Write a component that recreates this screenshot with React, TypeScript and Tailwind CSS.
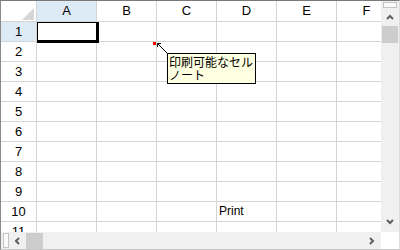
import React from "react";

const cols = ["A", "B", "C", "D", "E", "F"];
const rows = [1, 2, 3, 4, 5, 6, 7, 8, 9, 10, 11];

const Chevron = ({ dir }: { dir: "up" | "down" | "left" | "right" }) => {
  const d = {
    up: "M1 5 L4 2 L7 5",
    down: "M1 2 L4 5 L7 2",
    left: "M5 1 L2 4 L5 7",
    right: "M2 1 L5 4 L2 7",
  }[dir];
  return (
    <svg width="8" height="8" viewBox="0 0 8 8">
      <path d={d} fill="none" stroke="#606060" strokeWidth="2" />
    </svg>
  );
};

const App: React.FC = () => {
  return (
    <div className="w-[400px] h-[250px] bg-white border-t border-l border-t-[#7a7a7a] border-l-[#8a8a8a] border-r border-b border-r-[#dcdcdc] border-b-[#c8c8c8] flex flex-col overflow-hidden font-['Liberation_Sans','Noto_Sans_CJK_JP',sans-serif] text-[12px] text-black">
      <div className="flex h-[231px]">
        {/* sheet */}
        <div className="relative w-[380px] h-[231px] overflow-hidden">
          <div className="flex h-[21px]">
            <div className="relative w-[36px] shrink-0 border-r border-b border-[#d4d4d4]">
              <svg className="absolute left-[21px] top-[7px]" width="12" height="12" viewBox="0 0 12 12">
                <path d="M12 0 L12 12 L0 12 Z" fill="#d6d6d6" />
              </svg>
            </div>
            {cols.map((c) => (
              <div
                key={c}
                className={`w-[60px] shrink-0 border-r border-b border-[#d4d4d4] flex items-center justify-center text-[13px] ${c === "A" ? "bg-[#ddebf6]" : ""}`}
              >
                {c}
              </div>
            ))}
          </div>
          {rows.map((r) => (
            <div key={r} className="flex h-[20px] shrink-0">
              <div
                className={`w-[36px] shrink-0 border-r border-b border-[#d4d4d4] flex items-center justify-center text-[13px] ${r === 1 ? "bg-[#ddebf6]" : ""}`}
              >
                {r}
              </div>
              {cols.map((c) => (
                <div key={c} className="w-[60px] shrink-0 border-r border-b border-[#d4d4d4] flex items-end pl-[2px] pb-[4px] leading-none">
                  {r === 10 && c === "D" ? "Print" : ""}
                </div>
              ))}
            </div>
          ))}

          {/* selected cell */}
          <div className="absolute left-[36px] top-[21px] w-[62px] h-[21px] border-t border-l border-r-[3px] border-b-[3px] border-black" />

          {/* note indicator */}
          <div className="absolute left-[152px] top-[41px] w-[3px] h-[3px] bg-[#ff0000]" />
          <svg className="absolute left-[155px] top-[41px]" width="13" height="13" viewBox="0 0 13 13">
            <path d="M1.5 1.5 L11.5 11.5" stroke="#000" strokeWidth="1" />
            <path d="M1.5 1.5 L1.5 5 M1.5 1.5 L5 1.5" stroke="#000" strokeWidth="1" />
          </svg>

          {/* note */}
          <div className="absolute left-[166px] top-[52px] w-[89px] h-[31px] bg-[#ffffe1] border border-black pl-[1px] pt-[1px] text-[12px] leading-[13px] font-['Noto_Sans_CJK_JP',sans-serif]">
            印刷可能なセル
            <br />
            ノート
          </div>
        </div>

        {/* vertical scrollbar */}
        <div className="w-[18px] bg-[#f0f0f0] flex flex-col items-center">
          <div className="mt-[1px] w-[14px] h-[6px] border border-[#c4c4c4] bg-[#fafafa]" />
          <div className="mt-[5px] h-[10px] flex items-center justify-center">
            <Chevron dir="up" />
          </div>
          <div className="mt-[3px] w-[16px] h-[17px] bg-[#cdcdcd]" />
          <div className="flex-1" />
          <div className="mb-[5px] h-[10px] flex items-center justify-center">
            <Chevron dir="down" />
          </div>
        </div>
      </div>

      {/* horizontal scrollbar */}
      <div className="flex h-[17px]">
        <div className="w-[380px] bg-[#f0f0f0] flex items-center">
          <div className="ml-[2px] w-[6px] h-[15px] border border-[#c4c4c4] bg-[#fafafa]" />
          <div className="ml-[4px] w-[10px] flex items-center justify-center">
            <Chevron dir="left" />
          </div>
          <div className="ml-[3px] w-[17px] h-[16px] bg-[#cdcdcd]" />
          <div className="flex-1" />
          <div className="mr-[4px] w-[10px] flex items-center justify-center">
            <Chevron dir="right" />
          </div>
        </div>
        <div className="w-[18px] bg-white" />
      </div>
    </div>
  );
};

export default App;
